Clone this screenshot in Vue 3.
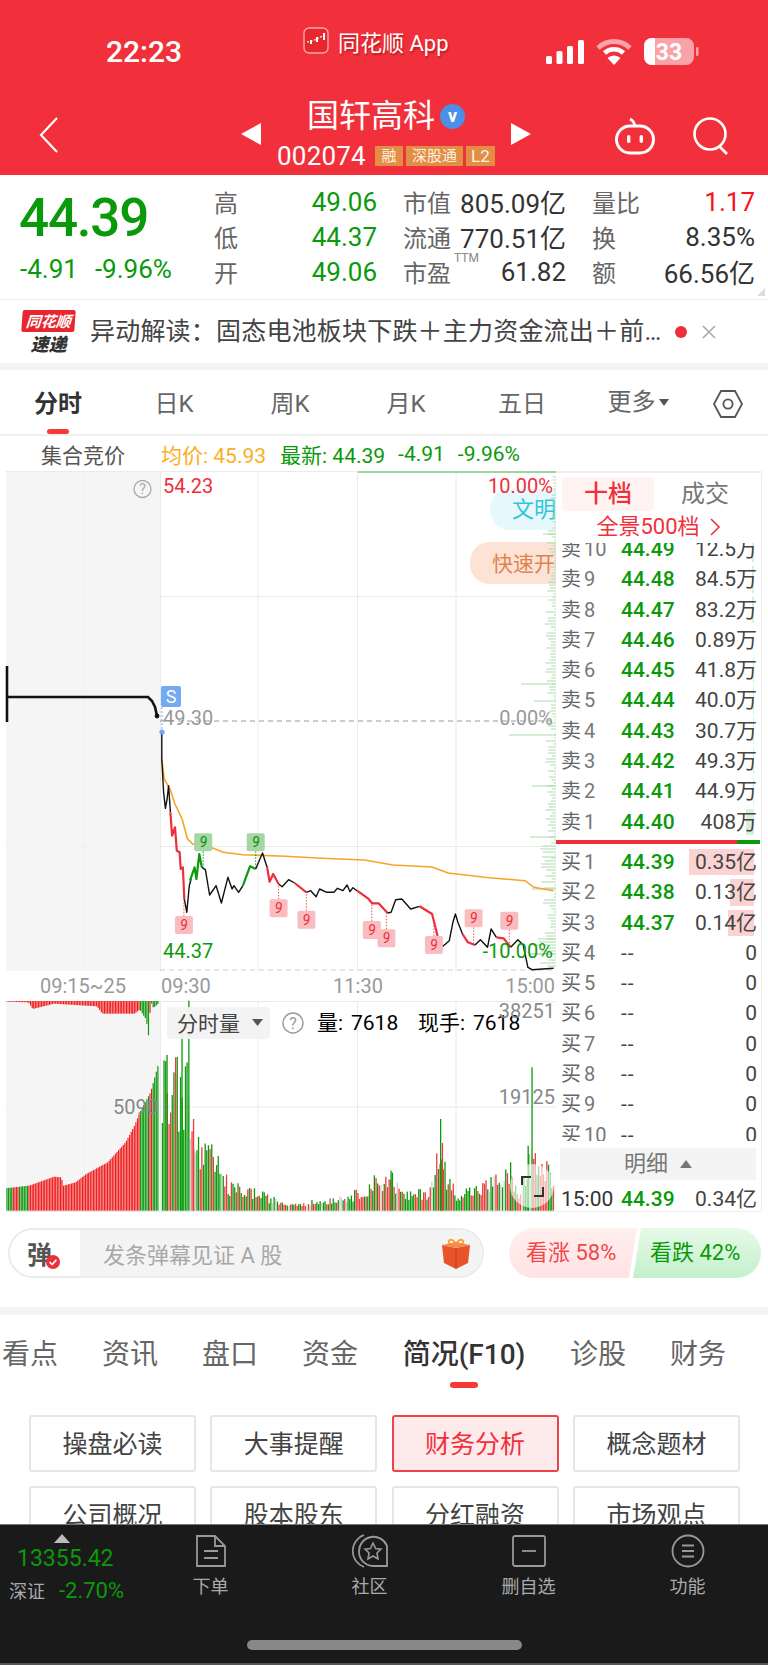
<script setup>
// Stock detail page. Chart coordinates are page pixels; traces were read from zoomed crops.
const sx = (x) => +(x / 2.8).toFixed(1)
const line = (arr) => arr.map(([x, y]) => `${sx(x)},${(660 + y / 3).toFixed(1)}`).join(' ')

let seed = 20740
const rnd = () => {
  seed = (seed * 1103515245 + 12345) % 2147483648
  return seed / 2147483648
}

const lerp = (table, x) => {
  for (let i = 1; i < table.length; i++) {
    if (x <= table[i][0]) {
      const [a, b] = table[i - 1]
      const [c, d] = table[i]
      return b + ((d - b) * (x - a)) / (c - a)
    }
  }
  return table[table.length - 1][1]
}

const priceSegments = [
  ['k', [[453, 220], [453, 300], [458, 400], [463, 448], [468, 420], [472, 380], [477, 460]]],
  ['r', [[477, 460], [482, 530], [490, 505], [495, 575], [503, 580], [506, 630], [512, 625], [516, 720]]],
  ['k', [[516, 720], [523, 760], [530, 680], [535, 660]]],
  ['g', [[532, 665], [545, 625], [550, 660], [558, 585], [565, 625]]],
  ['k', [[565, 625], [575, 632], [587, 708], [605, 680], [620, 732], [638, 655], [650, 690], [655, 680], [668, 700], [680, 680]]],
  ['g', [[680, 680], [700, 622], [716, 630]]],
  ['k', [[716, 630], [735, 582], [748, 625]]],
  ['r', [[748, 625], [755, 668], [765, 645], [780, 675]]],
  ['k', [[780, 675], [790, 683], [808, 662], [825, 672]]],
  ['r', [[825, 672], [858, 700]]],
  ['k', [[858, 700], [870, 695], [885, 713], [895, 690], [915, 700], [935, 700], [945, 688], [960, 695], [972, 678], [980, 698], [988, 686], [1000, 695]]],
  ['r', [[1000, 695], [1030, 718], [1042, 733], [1060, 733], [1085, 762]]],
  ['k', [[1085, 762], [1095, 760], [1108, 722], [1125, 720], [1150, 750], [1175, 742]]],
  ['r', [[1175, 742], [1210, 765], [1225, 830]]],
  ['k', [[1225, 830], [1240, 862], [1258, 845], [1268, 790], [1275, 765], [1282, 790], [1295, 825]]],
  ['r', [[1295, 825], [1310, 850], [1330, 858]]],
  ['k', [[1330, 858], [1345, 842], [1365, 865], [1375, 810], [1390, 835]]],
  ['r', [[1390, 835], [1410, 838], [1430, 865]]],
  ['k', [[1430, 865], [1450, 842], [1465, 858], [1478, 925], [1490, 932], [1550, 928]]],
].map(([c, p]) => ({ c, points: line(p) }))

const avgLine = line([[453, 300], [460, 360], [478, 395], [490, 435], [510, 480], [525, 540], [540, 555], [590, 565], [625, 580], [680, 587], [800, 592], [900, 598], [1020, 603], [1100, 618], [1210, 624], [1255, 642], [1370, 656], [1470, 665], [1495, 685], [1550, 695]])
const preLine = '7,667 7,723 7,698 60,698 120,698 148,698 152,702 155,708 157,717'

// [x, tag centre y, y the dotted stem ends at, colour]
const tags = [
  [569, 550, 625, 'g'], [716, 550, 625, 'g'],
  [515, 798, 720, 'r'], [780, 748, 675, 'r'], [858, 782, 700, 'r'], [1041, 813, 733, 'r'],
  [1082, 838, 762, 'r'], [1215, 858, 790, 'r'], [1326, 778, 858, 'r'], [1426, 785, 862, 'r'],
].map(([x, y, end, c]) => ({ x: sx(x), y: 660 + y / 3, end: 660 + end / 3, c }))

// Price distribution along the right edge of the chart
const depth = []
for (let y = 478; y < 970; y += 3) {
  const base = y < 530 ? 4 : y < 840 ? 10 : y < 920 ? 15 : 26
  depth.push({ y, len: 1 + rnd() * base })
}
for (const [y, len] of [[535, 13], [685, 35], [702, 22], [736, 47], [787, 24], [838, 26], [890, 24], [858, 14], [940, 18], [955, 24]]) {
  depth.push({ y, len })
}

const preTops = [[20, 597], [80, 590], [150, 563], [170, 565], [176, 590], [210, 580], [240, 555], [300, 520], [350, 460], [375, 410], [390, 370], [420, 310], [442, 225]]
const preHang = [[20, 36], [78, 38], [90, 58], [150, 42], [270, 50], [285, 72], [375, 72], [390, 60], [408, 90], [415, 145], [420, 34], [428, 55], [442, 42]]
const preBars = []
for (let x = 18; x < 444; x += 4.4) {
  const top = lerp(preTops, x)
  const green = (x < 34) || (x > 52 && x < 76) || (x > 388 && x < 418) || x > 424
  preBars.push({ x: sx(x), y: 990 + top / 3, h: (665 - top) / 3, c: green ? '#0d990d' : '#f21d1d' })
  preBars.push({ x: sx(x), y: 1002, h: Math.max(0.5, (lerp(preHang, x) - 34) / 3), c: green && x > 388 ? '#0d990d' : '#f21d1d', hang: true })
}

const envelope = [[452, 220], [480, 170], [520, 150], [535, 390], [570, 455], [600, 470], [640, 575], [700, 590], [800, 640], [900, 630], [1000, 600], [1040, 560], [1090, 530], [1130, 610], [1200, 590], [1225, 460], [1250, 530], [1275, 600], [1340, 580], [1420, 530], [1450, 600], [1480, 470], [1510, 490], [1550, 540]]
const mainBars = []
for (let x = 453; x < 1550; x += 4.6) {
  const top = lerp(envelope, x)
  const h = (665 - top) * (0.45 + rnd() * 0.55)
  const r = rnd()
  const c = r < 0.5 ? '#0d990d' : r < 0.93 ? '#ee3b3b' : '#cfcfcf'
  mainBars.push({ x: sx(x), y: 990 + (665 - h) / 3, h: h / 3, c })
}
for (const [x, top, c] of [[527, 35, '#0d990d'], [508, 130, '#0d990d'], [466, 198, '#0d990d'], [490, 205, '#ee3b3b'], [540, 390, '#ee3b3b'], [1232, 390, '#0d990d'], [1237, 462, '#ee3b3b'], [1488, 235, '#0d990d'], [1477, 470, '#0d990d'], [1093, 545, '#0d990d'], [1428, 520, '#0d990d']]) {
  mainBars.push({ x: sx(x), y: 990 + top / 3, h: (665 - top) / 3, c })
}

const stats = [
  [{ k: '高', v: '49.06', c: 'green' }, { k: '市值', v: '805.09亿' }, { k: '量比', v: '1.17', c: 'red' }],
  [{ k: '低', v: '44.37', c: 'green' }, { k: '流通', v: '770.51亿' }, { k: '换', v: '8.35%' }],
  [{ k: '开', v: '49.06', c: 'green' }, { k: '市盈', v: '61.82', ttm: true }, { k: '额', v: '66.56亿' }],
].flat()

const periods = ['日K', '周K', '月K', '五日']

const asks = [
  ['卖10', '44.49', '12.5万', 2], ['卖9', '44.48', '84.5万', 2], ['卖8', '44.47', '83.2万', 2],
  ['卖7', '44.46', '0.89万', 0], ['卖6', '44.45', '41.8万', 1], ['卖5', '44.44', '40.0万', 1],
  ['卖4', '44.43', '30.7万', 1], ['卖3', '44.42', '49.3万', 1], ['卖2', '44.41', '44.9万', 1],
  ['卖1', '44.40', '408万', 8],
]
const bids = [
  ['买1', '44.39', '0.35亿', 65], ['买2', '44.38', '0.13亿', 24], ['买3', '44.37', '0.14亿', 26],
  ['买4', '--', '0', 0], ['买5', '--', '0', 0], ['买6', '--', '0', 0], ['买7', '--', '0', 0],
  ['买8', '--', '0', 0], ['买9', '--', '0', 0], ['买10', '--', '0', 0],
]

const infoTabs = ['看点', '资讯', '盘口', '资金', '简况(F10)', '诊股', '财务']
const buttons = ['操盘必读', '大事提醒', '财务分析', '概念题材', '公司概况', '股本股东', '分红融资', '市场观点']
</script>

<template>
  <div class="page">
    <header class="top">
      <div class="status">
        <div class="clock">22:23</div>
        <div class="app-tag">
          <svg class="app-logo" width="26" height="27" viewBox="0 0 26 27">
            <rect x="1" y="1" width="24" height="25" rx="5" fill="#e8262e" stroke="#f7a9ad" stroke-width="1.4" />
            <path d="M4 15 L9 14 L14 12 L21 8" fill="none" stroke="#fff" stroke-width="1.2" stroke-dasharray="2 1.5" />
            <rect x="20" y="6" width="2" height="7" fill="#fff" />
            <rect x="13" y="10" width="2" height="5" fill="#fff" />
            <rect x="7" y="13" width="2" height="4" fill="#fff" />
          </svg>
          <span>同花顺 App</span>
        </div>
        <div class="sys">
          <svg width="38" height="24" viewBox="0 0 38 24">
            <rect x="0" y="16" width="6" height="8" rx="1.5" fill="#fff" />
            <rect x="10.5" y="11" width="6" height="13" rx="1.5" fill="#fff" />
            <rect x="21" y="6" width="6" height="18" rx="1.5" fill="#fff" />
            <rect x="32" y="0" width="6" height="24" rx="1.5" fill="#fff" />
          </svg>
          <svg width="36" height="26" viewBox="0 0 36 26">
            <path d="M2 9 A23 23 0 0 1 34 9" fill="none" stroke="#f9a3a8" stroke-width="5" />
            <path d="M8.5 14 A14 14 0 0 1 27.5 14" fill="none" stroke="#fff" stroke-width="4.6" />
            <path d="M18 26 L11.5 19 A9.5 9.5 0 0 1 24.5 19 Z" fill="#fff" />
          </svg>
          <svg width="56" height="28" viewBox="0 0 56 28">
            <defs>
              <clipPath id="batt-left"><rect x="0" y="0" width="11" height="28" /></clipPath>
            </defs>
            <rect x="0" y="0" width="50" height="27" rx="8" fill="#f9a3a8" />
            <path d="M0 8 a8 8 0 0 1 8 -8 h3 v27 h-3 a8 8 0 0 1 -8 -8 z" fill="#fff" />
            <rect x="52" y="9" width="2.5" height="9" rx="1.2" fill="#f9a3a8" />
            <text x="25" y="22" text-anchor="middle" class="batt" fill="#fff">33</text>
            <text x="25" y="22" text-anchor="middle" class="batt" fill="#f2303c" clip-path="url(#batt-left)">33</text>
          </svg>
        </div>
      </div>
      <div class="nav">
        <div class="nav-left">
          <svg width="20" height="36" viewBox="0 0 20 36"><path d="M18 1 L2 18 L18 35" fill="none" stroke="#fff" stroke-width="2.2" /></svg>
        </div>
        <div class="tri tri-l"></div>
        <div class="title">
          <div class="name">国轩高科<span class="v">v</span></div>
          <div class="code">
            <span class="num">002074</span>
            <span class="badge b1">融</span>
            <span class="badge b2">深股通</span>
            <span class="badge b3">L2</span>
          </div>
        </div>
        <div class="tri tri-r"></div>
        <div class="nav-right">
          <svg width="42" height="38" viewBox="0 0 42 38">
            <path d="M21 9 Q20 4 16 2" fill="none" stroke="#fff" stroke-width="2.6" />
            <rect x="2.5" y="9" width="37" height="27" rx="13.5" fill="none" stroke="#fff" stroke-width="3" />
            <rect x="13" y="18" width="3.4" height="8" rx="1.7" fill="#fff" />
            <rect x="25.6" y="18" width="3.4" height="8" rx="1.7" fill="#fff" />
          </svg>
          <svg width="38" height="38" viewBox="0 0 38 38">
            <circle cx="18" cy="17" r="15.5" fill="none" stroke="#fff" stroke-width="2.6" />
            <path d="M27 29 L35 37" stroke="#fff" stroke-width="2.6" />
          </svg>
        </div>
      </div>
    </header>

    <section class="quote">
      <div class="price-box">
        <div class="last">44.39</div>
        <div class="chg"><span>-4.91</span><span>-9.96%</span></div>
      </div>
      <div class="stats">
        <div v-for="s in stats" :key="s.k" class="stat">
          <span class="k">{{ s.k }}<sup v-if="s.ttm" class="ttm">TTM</sup></span>
          <span class="val" :class="s.c">{{ s.v }}</span>
        </div>
      </div>
      <i class="corner"></i>
    </section>

    <section class="news">
      <div class="news-logo">
        <div class="nl-top">同花顺</div>
        <div class="nl-bot">速递</div>
      </div>
      <div class="news-text">异动解读：固态电池板块下跌＋主力资金流出＋前…</div>
      <i class="news-dot"></i>
      <svg width="14" height="14" viewBox="0 0 14 14"><path d="M1 1 L13 13 M13 1 L1 13" stroke="#aaa" stroke-width="1.6" /></svg>
    </section>

    <nav class="periods">
      <div class="period on">分时<i></i></div>
      <div v-for="p in periods" :key="p" class="period">{{ p }}</div>
      <div class="period more">更多<b></b></div>
      <svg class="hex" width="32" height="30" viewBox="0 0 32 30">
        <path d="M9 2 H23 L30 15 L23 28 H9 L2 15 Z" fill="none" stroke="#555" stroke-width="1.8" />
        <circle cx="16" cy="15" r="4.6" fill="none" stroke="#555" stroke-width="1.8" />
      </svg>
    </nav>

    <div class="summary">
      <span class="auction">集合竞价</span>
      <span class="orange">均价: 45.93</span>
      <span class="green gap-a">最新: 44.39</span>
      <span class="green gap-b">-4.91</span>
      <span class="green gap-b">-9.96%</span>
    </div>

    <section class="market">
      <svg class="chart" width="556" height="741" viewBox="0 472 556 741">
        <rect x="6" y="472" width="154" height="500" fill="#f5f5f5" />
        <rect x="6" y="1002" width="154" height="210" fill="#f5f5f5" />
        <path d="M160.5 472 V972 M258 472 V972 M357.5 472 V972 M456 472 V972 M160.5 1002 V1212 M258 1002 V1212 M357.5 1002 V1212 M456 1002 V1212 M160 597.5 H556 M160 847.5 H556 M160 1108 H556" stroke="#eaeaea" fill="none" />
        <path d="M6 847.5 H160 M84 472 V972 M6 1108 H160 M84 1002 V1212" stroke="#e8e8e8" stroke-dasharray="1 3" fill="none" />
        <path d="M6 472.5 H358" stroke="#eaeaea" />
        <path d="M358 473 H556" stroke="#9fd6a0" stroke-width="2" />

        <rect x="490" y="490" width="90" height="41" rx="20" fill="#e6f8fb" />
        <text x="512" y="518" class="bubble" fill="#2cc6d8">文明</text>
        <rect x="470" y="543" width="110" height="42" rx="20" fill="#fde3d6" />
        <text x="492" y="572" class="bubble small" fill="#e2824e">快速开</text>

        <line v-for="(d, i) in depth" :key="i" :x1="556 - d.len" :x2="556" :y1="d.y" :y2="d.y" stroke="#a9dcaa" />

        <path d="M160 722 H553" stroke="#999" stroke-dasharray="5 4" />
        <path d="M160 971 H553" stroke="#e6c7ac" stroke-dasharray="5 4" />
        <polyline :points="preLine" fill="none" stroke="#111" stroke-width="2.6" />
        <circle cx="157" cy="717" r="2.4" fill="#111" />
        <polyline :points="avgLine" fill="none" stroke="#f7a326" stroke-width="1.6" />
        <polyline v-for="(seg, i) in priceSegments" :key="i" :points="seg.points" fill="none" stroke-linejoin="round" :class="'seg-' + seg.c" />

        <g v-for="(t, i) in tags" :key="'t' + i">
          <line :x1="t.x" :x2="t.x" :y1="t.y" :y2="t.end" :stroke="t.c === 'g' ? '#0d990d' : '#f0535a'" stroke-dasharray="1.5 1.5" />
          <rect :x="t.x - 9" :y="t.y - 9" width="18" height="18" rx="2" :fill="t.c === 'g' ? '#a4d7a4' : '#f9bcc0'" />
          <text :x="t.x" :y="t.y + 5" text-anchor="middle" class="tag" :fill="t.c === 'g' ? '#0d8f0d' : '#ee2f3a'">9</text>
        </g>

        <line x1="162" x2="162" y1="708" y2="733" stroke="#6fa8f0" stroke-dasharray="2 2" />
        <circle cx="162" cy="733" r="2.6" fill="#6fa8f0" />
        <rect x="161" y="687" width="20" height="21" rx="2" fill="#74aaf2" />
        <text x="171" y="704" text-anchor="middle" class="s-mark">S</text>

        <circle cx="142.5" cy="490" r="8.5" fill="none" stroke="#aaa" stroke-width="1.3" />
        <text x="142.5" y="495" text-anchor="middle" class="hint">?</text>

        <text x="163" y="494" class="lbl" fill="#ee2f3a">54.23</text>
        <text x="553" y="494" text-anchor="end" class="lbl" fill="#ee2f3a">10.00%</text>
        <text x="163" y="726" class="lbl" fill="#999">49.30</text>
        <text x="553" y="726" text-anchor="end" class="lbl" fill="#999">0.00%</text>
        <text x="163" y="959" class="lbl" fill="#0d990d">44.37</text>
        <text x="553" y="959" text-anchor="end" class="lbl" fill="#0d990d">-10.00%</text>

        <text x="83" y="994" text-anchor="middle" class="lbl" fill="#999">09:15~25</text>
        <text x="161" y="994" class="lbl" fill="#999">09:30</text>
        <text x="358" y="994" text-anchor="middle" class="lbl" fill="#999">11:30</text>
        <text x="555" y="994" text-anchor="end" class="lbl" fill="#999">15:00</text>

        <path d="M6 1002.5 H556 M6 1212.5 H556" stroke="#eaeaea" />
        <rect v-for="(b, i) in preBars" :key="'p' + i" :x="b.x" :y="b.y" width="1.2" :height="b.h" :fill="b.c" />
        <rect v-for="(b, i) in mainBars" :key="'m' + i" :x="b.x" :y="b.y" width="1.3" :height="b.h" :fill="b.c" />

        <rect x="167" y="1008" width="103" height="32" rx="4" fill="#f3f3f3" opacity="0.96" />
        <text x="177" y="1032" class="vol">分时量</text>
        <path d="M252 1020 H263 L257.5 1027 Z" fill="#555" />
        <circle cx="293" cy="1024" r="10" fill="none" stroke="#999" stroke-width="1.4" />
        <text x="293" y="1030" text-anchor="middle" class="hint big">?</text>
        <text x="317" y="1031" class="vol" fill="#777">量:</text>
        <text x="351" y="1031" class="vol" fill="#bbb">7618</text>
        <text x="418" y="1031" class="vol" fill="#777">现手:</text>
        <text x="473" y="1031" class="vol" fill="#0d990d">7618</text>
        <text x="555" y="1019" text-anchor="end" class="lbl" fill="#888">38251</text>
        <text x="555" y="1105" text-anchor="end" class="lbl" fill="#888">19125</text>
        <text x="158" y="1115" text-anchor="end" class="lbl" fill="#888">5090</text>

        <circle cx="532" cy="1187" r="22" fill="#fff" opacity="0.62" />
        <path d="M522 1186 V1178 H531 M543 1188 V1197 H534" fill="none" stroke="#333" stroke-width="2" />
      </svg>

      <aside class="book">
        <div class="book-tabs">
          <span class="bt on">十档</span>
          <span class="bt">成交</span>
        </div>
        <div class="book-500">全景500档<svg width="11" height="20" viewBox="0 0 11 20"><path d="M1 2 L9 10 L1 18" fill="none" stroke="#f2303c" stroke-width="1.6" /></svg></div>
        <div class="levels">
          <div class="levels-in">
            <div v-for="r in asks" :key="r[0]" class="row">
              <i class="bar ask" :style="{ width: r[3] + 'px' }"></i>
              <span class="r-name">{{ r[0].slice(0, 1) }}<em>{{ r[0].slice(1) }}</em></span>
              <span class="r-price">{{ r[1] }}</span>
              <span class="r-vol">{{ r[2] }}</span>
            </div>
            <div class="split"><i></i></div>
            <div v-for="r in bids" :key="r[0]" class="row">
              <i class="bar bid" :style="{ width: r[3] + 'px' }"></i>
              <span class="r-name">{{ r[0].slice(0, 1) }}<em>{{ r[0].slice(1) }}</em></span>
              <span class="r-price" :class="{ none: r[1] === '--' }">{{ r[1] }}</span>
              <span class="r-vol">{{ r[2] }}</span>
            </div>
          </div>
        </div>
        <div class="detail-head">明细<b></b></div>
        <div class="row last-row">
          <span class="r-time">15:00</span>
          <span class="r-price">44.39</span>
          <span class="r-vol green">0.34亿</span>
        </div>
      </aside>
    </section>

    <section class="interact">
      <div class="danmu">
        <div class="dm-icon">弹<svg width="14" height="14" viewBox="0 0 14 14"><circle cx="7" cy="7" r="7" fill="#ee2f3a" /><path d="M3.6 7 L6.2 9.6 L10.4 4.8" fill="none" stroke="#fff" stroke-width="1.6" /></svg></div>
        <div class="dm-input">
          <span>发条弹幕见证 A 股</span>
          <svg width="32" height="32" viewBox="0 0 32 32">
            <path d="M16 7 C12 0 6 3 10 7 M16 7 C20 0 26 3 22 7" fill="none" stroke="#f0a93c" stroke-width="2" />
            <path d="M2 8 L16 11 L30 8 L28 26 L16 32 L4 26 Z" fill="#e8532c" />
            <path d="M2 8 L16 5 L30 8 L16 11 Z" fill="#f58a4b" />
            <path d="M16 11 V32" stroke="#c93d1e" />
          </svg>
        </div>
      </div>
      <div class="vote">
        <div class="up">看涨 58%</div>
        <div class="down">看跌 42%</div>
      </div>
    </section>

    <div class="band"></div>

    <nav class="info-tabs">
      <div v-for="t in infoTabs" :key="t" class="info-tab" :class="{ on: t === '简况(F10)' }">{{ t }}<i v-if="t === '简况(F10)'"></i></div>
    </nav>

    <section class="btns">
      <div v-for="b in buttons" :key="b" class="btn" :class="{ on: b === '财务分析' }">{{ b }}</div>
    </section>

    <footer class="dock">
      <div class="index">
        <i class="idx-tri"></i>
        <div class="idx-val">13355.42</div>
        <div class="idx-row"><span>深证</span><em>-2.70%</em></div>
      </div>
      <div class="dock-item">
        <svg width="32" height="34" viewBox="0 0 32 34"><path d="M2 2 H20 L30 12 V32 H2 Z M20 2 V12 H30 M9 17 H23 M9 24 H23" fill="none" stroke="#999" stroke-width="1.8" /></svg>
        <span>下单</span>
      </div>
      <div class="dock-item">
        <svg width="38" height="34" viewBox="0 0 38 34">
          <path d="M13 1 A17 17 0 0 0 13 33" fill="none" stroke="#999" stroke-width="1.6" />
          <path d="M8 17 A14.5 14.5 0 0 1 36 12 V32 H22 A14.5 14.5 0 0 1 8 17 Z" fill="none" stroke="#999" stroke-width="1.8" />
          <path d="M22 9 L24.6 14.5 L30 15.2 L26 19 L27 25 L22 22 L17 25 L18 19 L14 15.2 L19.4 14.5 Z" fill="none" stroke="#999" stroke-width="1.6" />
        </svg>
        <span>社区</span>
      </div>
      <div class="dock-item">
        <svg width="34" height="32" viewBox="0 0 34 32"><rect x="1" y="1" width="32" height="30" rx="2" fill="none" stroke="#999" stroke-width="1.8" /><path d="M10 16 H24" stroke="#999" stroke-width="1.8" /></svg>
        <span>删自选</span>
      </div>
      <div class="dock-item">
        <svg width="34" height="34" viewBox="0 0 34 34"><circle cx="17" cy="17" r="15.5" fill="none" stroke="#999" stroke-width="1.8" /><path d="M11 11.5 H23 M11 17 H23 M11 22.5 H23" stroke="#999" stroke-width="1.8" /></svg>
        <span>功能</span>
      </div>
      <i class="home"></i>
    </footer>
  </div>
</template>

<style>
html, body { margin: 0; background: #fff; }
</style>

<style scoped>
.page { width: 768px; height: 1665px; overflow: hidden; display: flex; flex-direction: column; font-family: Roboto, "Noto Sans CJK SC", sans-serif; color: #333; background: #fff; position: relative; }
.green { color: #0a990a; }
.red { color: #f5141e; }
.orange { color: #fbae1e; }

.top { background: #f2303c; height: 175px; color: #fff; flex: none; }
.status { height: 90px; display: flex; position: relative; }
.clock { width: 288px; text-align: center; font-size: 30px; font-weight: 500; line-height: 36px; padding-top: 34px; }
.app-tag { margin-left: 15px; margin-top: 27px; display: flex; align-items: center; gap: 9px; height: 27px; font-size: 22px; text-shadow: 1px 2px 2px rgba(120, 0, 0, .45); }
.sys { margin-left: auto; margin-top: 38px; padding-right: 68px; display: flex; align-items: center; gap: 12px; height: 28px; }
.batt { font: 700 23px Roboto, sans-serif; }

.nav { height: 85px; display: flex; }
.nav-left { width: 241px; padding: 27px 0 0 39px; box-sizing: border-box; }
.tri { width: 0; height: 0; margin-top: 33px; border-top: 11px solid transparent; border-bottom: 11px solid transparent; }
.tri-l { border-right: 20px solid #fff; }
.tri-r { border-left: 20px solid #fff; }
.title { width: 250px; display: flex; flex-direction: column; align-items: center; }
.name { font-size: 32px; line-height: 46px; height: 46px; margin-top: 3px; display: flex; align-items: center; }
.v { width: 25px; height: 25px; margin-left: 5px; border-radius: 50%; background: #4a90e8; font: 700 18px/23px Roboto, sans-serif; text-align: center; }
.code { display: flex; align-items: center; height: 20px; margin-top: 7px; }
.num { font-size: 26px; margin-right: 9px; letter-spacing: .2px; }
.badge { background: #e28e45; height: 20px; line-height: 20px; font-size: 15px; text-align: center; color: #fdf0e0; margin-right: 3px; }
.b1 { width: 28px; }
.b2 { width: 57px; }
.b3 { width: 29px; margin-right: 0; font-size: 17px; }
.nav-right { flex: 1; padding: 27px 0 0 83px; display: flex; gap: 36px; align-items: flex-start; }

.quote { height: 124px; flex: none; display: flex; position: relative; box-sizing: border-box; }
.price-box { width: 214px; flex: none; padding-left: 19px; box-sizing: border-box; }
.last { color: #0a990a; font-size: 53px; font-weight: 500; line-height: 60px; margin-top: 13px; letter-spacing: -1.2px; }
.chg { color: #0a990a; font-size: 26px; line-height: 30px; margin-top: 6px; display: flex; gap: 17px; white-space: nowrap; margin-left: 1px; }
.stats { display: grid; grid-template-columns: repeat(3, 163px); column-gap: 26px; grid-auto-rows: 35px; padding-top: 9px; }
.stat { display: flex; justify-content: space-between; align-items: center; white-space: nowrap; }
.k { font-size: 24px; color: #666; position: relative; }
.val { font-size: 26px; }
.ttm { position: absolute; left: 51px; top: -3px; font-size: 12px; line-height: 14px; color: #888; }
.corner { position: absolute; right: 3px; bottom: 3px; width: 0; height: 0; border-left: 8px solid transparent; border-bottom: 8px solid #ddd; }

.news { height: 64px; flex: none; border-top: 1px solid #efefef; box-sizing: border-box; display: flex; align-items: center; border-bottom: 7px solid #f4f4f4; height: 71px; padding-left: 22px; }
.news-logo { width: 53px; flex: none; text-align: center; margin-right: 15px; }
.nl-top { background: #e8262e; color: #fff; font: italic 700 15px/22px "Noto Sans CJK SC", sans-serif; border-radius: 2px; transform: skewX(-4deg); }
.nl-bot { font: italic 900 18px/22px "Noto Sans CJK SC", sans-serif; color: #333; }
.news-text { width: 585px; font-size: 25px; line-height: 34px; color: #444; white-space: nowrap; overflow: hidden; flex: none; letter-spacing: .2px; }
.news-dot { width: 12px; height: 12px; border-radius: 50%; background: #ee2f3a; margin-left: 0; margin-right: 15px; flex: none; }

.periods { height: 66px; flex: none; display: flex; position: relative; border-bottom: 2px solid #f0f0f0; box-sizing: border-box; }
.period { position: relative; width: 116px; text-align: center; font-size: 24px; line-height: 68px; color: #666; flex: none; }
.period.on { color: #333; font-weight: 700; }
.period.on i { position: absolute; left: 47px; top: 59px; width: 22px; height: 5px; border-radius: 3px; background: #f53a36; }
.period.more { display: flex; justify-content: center; align-items: center; gap: 3px; }
.period.more b { width: 0; height: 0; border-left: 5.5px solid transparent; border-right: 5.5px solid transparent; border-top: 7px solid #555; }
.hex { margin: 19px 0 0 16px; }

.summary { height: 35px; flex: none; display: flex; align-items: center; font-size: 21px; white-space: nowrap; }
.auction { width: 161px; padding-left: 41px; box-sizing: border-box; color: #555; font-size: 21px; flex: none; }
.gap-a { margin-left: 14px; }
.gap-b { margin-left: 13px; }

.market { height: 741px; flex: none; display: flex; }
.chart { display: block; flex: none; overflow: hidden; }
.seg-k { stroke: #111; stroke-width: 1.4; }
.seg-r { stroke: #ee2f3a; stroke-width: 2.2; }
.seg-g { stroke: #0d990d; stroke-width: 2.2; }
.lbl { font: 20px Roboto, sans-serif; }
.tag { font: italic 14px Roboto, sans-serif; }
.s-mark { font: 18px Roboto, sans-serif; fill: #fff; }
.hint { font: 14px Roboto, sans-serif; fill: #aaa; }
.hint.big { font-size: 16px; fill: #999; }
.vol { font: 21px Roboto, "Noto Sans CJK SC", sans-serif; fill: #444; }
.vol[fill] { fill: attr(fill); }
.bubble { font: 22px "Noto Sans CJK SC", sans-serif; }
.bubble.small { font-size: 21px; }

.book { width: 206px; flex: none; border-top: 2px solid #eee; border-right: 1px solid #eee; border-bottom: 1px solid #eee; box-sizing: border-box; display: flex; flex-direction: column; }
.book-tabs { display: flex; height: 34px; margin: 4px 0 0 6px; }
.bt { width: 92px; text-align: center; font-size: 24px; line-height: 34px; color: #777; }
.bt.on { background: #fff3f2; border-radius: 4px; color: #f2303c; font-weight: 500; }
.bt + .bt { width: 102px; }
.book-500 { height: 32px; line-height: 32px; color: #f2303c; font-size: 22px; display: flex; align-items: center; justify-content: center; gap: 10px; flex: none; }
.levels { height: 598px; overflow: hidden; flex: none; }
.levels-in { margin-top: -9px; }
.row { position: relative; height: 30.3px; line-height: 30.3px; display: flex; padding-left: 5px; font-size: 20px; white-space: nowrap; }
.bar { position: absolute; right: 7px; top: 2px; bottom: 2px; }
.bar.ask { background: #d9efd9; }
.bar.bid { background: #fbd3d3; }
.r-name { width: 60px; color: #666; position: relative; }
.r-name em { font-style: normal; margin-left: 3px; color: #777; }
.r-price { width: 60px; color: #0a990a; font-weight: 500; font-size: 21px; position: relative; }
.r-price.none { color: #444; font-weight: 400; letter-spacing: 1px; }
.r-vol { flex: 1; text-align: right; padding-right: 4px; color: #444; font-size: 21px; position: relative; }
.split { height: 4px; margin: 3px 1px 3px 0; background: #0a990a; }
.split i { display: block; width: 181px; height: 4px; background: #ee2f3a; }
.detail-head { margin: 7px 5px 0 4px; height: 32px; background: #f4f4f4; color: #777; font-size: 22px; line-height: 32px; display: flex; align-items: center; justify-content: center; gap: 12px; flex: none; }
.detail-head b { width: 0; height: 0; border-left: 6px solid transparent; border-right: 6px solid transparent; border-bottom: 8px solid #777; }
.last-row { margin-top: 4px; }
.r-time { width: 60px; color: #333; font-size: 21px; }

.interact { height: 95px; flex: none; display: flex; padding: 16px 7px 0 8px; box-sizing: border-box; }
.danmu { width: 476px; height: 50px; border: 2px solid #ebebeb; border-radius: 25px; overflow: hidden; display: flex; box-sizing: border-box; flex: none; }
.dm-icon { width: 70px; flex: none; position: relative; font: 700 25px/46px "Noto Sans CJK SC", sans-serif; color: #555; padding-left: 17px; box-sizing: border-box; background: #fff; }
.dm-icon svg { position: absolute; left: 36px; top: 25px; }
.dm-input { flex: 1; background: #f4f4f4; display: flex; align-items: center; justify-content: space-between; padding: 0 10px 0 23px; color: #a8a8a8; font-size: 22px; }
.vote { margin-left: 25px; display: flex; height: 50px; width: 252px; font-size: 22px; line-height: 50px; }
.up, .down { width: 128px; flex: none; box-sizing: border-box; }
.up { background: linear-gradient(#ffefed, #ffe3e3); color: #f4464a; border-radius: 25px 0 0 25px; padding-left: 17px; clip-path: polygon(0 0, 100% 0, calc(100% - 8px) 100%, 0 100%); }
.down { margin-left: -4px; background: linear-gradient(#e6fae8, #c4f0cc); color: #0a990a; border-radius: 0 25px 25px 0; padding-left: 17px; clip-path: polygon(8px 0, 100% 0, 100% 100%, 0 100%); }

.band { height: 8px; background: #f4f4f4; flex: none; }

.info-tabs { height: 73px; flex: none; position: relative; display: flex; }
.info-tab { position: relative; flex: none; width: 100px; text-align: center; font-size: 28px; line-height: 80px; color: #666; white-space: nowrap; margin-left: 0; }
.info-tab:first-child { margin-left: -20px; }
.info-tab.on { width: 168px; color: #333; font-weight: 500; }
.info-tab.on i { position: absolute; left: 70px; top: 67px; width: 28px; height: 6px; border-radius: 3px; background: #f53a36; }

.btns { height: 136px; flex: none; overflow: hidden; display: grid; grid-template-columns: repeat(4, 167px); column-gap: 14.3px; grid-auto-rows: 57px; row-gap: 14px; padding: 27px 0 0 29px; box-sizing: border-box; }
.btn { border: 2px solid #e6e6e6; border-radius: 3px; box-sizing: border-box; text-align: center; font-size: 25px; line-height: 55px; color: #444; }
.btn.on { border-color: #f0424a; background: #fdeaea; color: #f2303c; }

.dock { flex: 1; background: #1a1a1a; border-top: 1px solid #777; border-bottom: 2px solid #555; box-sizing: border-box; display: flex; position: relative; }
.index { width: 131px; flex: none; position: relative; }
.idx-tri { position: absolute; left: 54px; top: 9px; width: 0; height: 0; border-left: 8px solid transparent; border-right: 8px solid transparent; border-bottom: 9px solid #bbb; }
.idx-val { position: absolute; left: 17px; top: 20px; color: #0a990a; font-size: 23px; line-height: 28px; }
.idx-row { position: absolute; left: 9px; top: 52px; display: flex; align-items: center; gap: 14px; white-space: nowrap; }
.idx-row span { color: #aaa; font-size: 18px; }
.idx-row em { font-style: normal; color: #0a990a; font-size: 22px; }
.dock-item { width: 159px; flex: none; display: flex; flex-direction: column; align-items: center; padding-top: 9px; color: #aaa; font-size: 18px; height: 80px; gap: 4px; }
.dock-item svg { height: 34px; }
.home { position: absolute; left: 247px; top: 115px; width: 275px; height: 10px; border-radius: 5px; background: #888; }
</style>
